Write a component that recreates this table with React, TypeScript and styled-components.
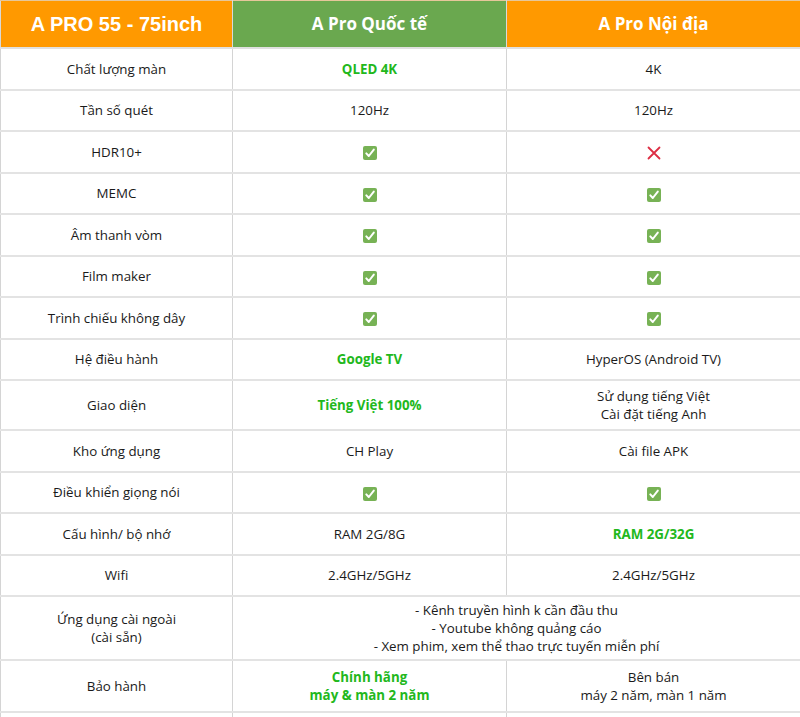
import * as React from 'react';
import styled, { createGlobalStyle } from 'styled-components';

const GlobalStyle = createGlobalStyle`
    html, body {
        margin: 0;
        padding: 0;
        background: #ffffff;
    }
    body {
        font-family: 'Open Sans', 'Noto Sans', sans-serif;
        color: #1a1a1a;
    }
`;

const Table = styled.table`
    width: 800px;
    border-collapse: collapse;
    table-layout: fixed;
    font-size: 13.33px;
    line-height: 18px;
`;

const HeadCell = styled.th<{ $bg: string; $arial?: boolean }>`
    height: 46px;
    padding: 0;
    background: ${(p) => p.$bg};
    color: #ffffff;
    font-family: ${(p) => (p.$arial ? "'Liberation Sans', Arial, sans-serif" : "'Open Sans', 'Noto Sans', sans-serif")};
    font-size: ${(p) => (p.$arial ? '20px' : '17px')};
    font-weight: bold;
    text-align: center;
    border-top: 1px solid #e6c79a;
    border-right: 1px solid #d9d9d9;
    border-bottom: 2px solid #e0e0e0;
    &:first-child {
        border-left: 1px solid #d9d9d9;
    }
`;

const Row = styled.tr<{ $h?: number }>`
    height: ${(p) => p.$h ?? 41.5}px;
`;

const Cell = styled.td<{ $green?: boolean }>`
    padding: 0 6px;
    text-align: center;
    vertical-align: middle;
    color: ${(p) => (p.$green ? '#22b81c' : '#1a1a1a')};
    font-weight: ${(p) => (p.$green ? 700 : 400)};
    border-right: 1px solid #d4d4d4;
    border-bottom: 2px solid #e3e3e3;
    &:first-child {
        border-left: 1px solid #d4d4d4;
    }
`;

const IconBox = styled.span`
    display: inline-flex;
    vertical-align: middle;
`;

const Check = () => (
    <IconBox>
        <svg width="14" height="14" viewBox="0 0 14 14">
            <rect x="0" y="0" width="14" height="14" rx="2" fill="#77b255" />
            <path d="M3.3 7.4 L5.8 10 L10.8 3.6" stroke="#ffffff" strokeWidth="2" fill="none" strokeLinecap="round" strokeLinejoin="round" />
        </svg>
    </IconBox>
);

const Cross = () => (
    <IconBox>
        <svg width="14" height="14" viewBox="0 0 14 14">
            <path d="M1.5 1.5 L12.5 12.5 M12.5 1.5 L1.5 12.5" stroke="#dd2e44" strokeWidth="1.8" strokeLinecap="round" />
        </svg>
    </IconBox>
);

type Value = React.ReactNode;

interface RowData {
    label: Value;
    intl: Value;
    local: Value;
    intlGreen?: boolean;
    localGreen?: boolean;
    h?: number;
}

const rows: RowData[] = [
    { label: 'Chất lượng màn', intl: 'QLED 4K', intlGreen: true, local: '4K' },
    { label: 'Tần số quét', intl: '120Hz', local: '120Hz' },
    { label: 'HDR10+', intl: <Check />, local: <Cross /> },
    { label: 'MEMC', intl: <Check />, local: <Check /> },
    { label: 'Âm thanh vòm', intl: <Check />, local: <Check /> },
    { label: 'Film maker', intl: <Check />, local: <Check /> },
    { label: 'Trình chiếu không dây', intl: <Check />, local: <Check /> },
    { label: 'Hệ điều hành', intl: 'Google TV', intlGreen: true, local: 'HyperOS (Android TV)' },
    {
        label: 'Giao diện',
        intl: 'Tiếng Việt 100%',
        intlGreen: true,
        local: (
            <>
                Sử dụng tiếng Việt
                <br />
                Cài đặt tiếng Anh
            </>
        ),
        h: 50,
    },
    { label: 'Kho ứng dụng', intl: 'CH Play', local: 'Cài file APK' },
    { label: 'Điều khiển giọng nói', intl: <Check />, local: <Check /> },
    { label: 'Cấu hình/ bộ nhớ', intl: 'RAM 2G/8G', local: 'RAM 2G/32G', localGreen: true },
    { label: 'Wifi', intl: '2.4GHz/5GHz', local: '2.4GHz/5GHz' },
];

const App: React.FC = () => (
    <>
        <GlobalStyle />
        <Table>
            <colgroup>
                <col style={{ width: 232 }} />
                <col style={{ width: 274 }} />
                <col style={{ width: 294 }} />
            </colgroup>
            <thead>
                <tr>
                    <HeadCell $bg="#ff9900" $arial>
                        A PRO 55 - 75inch
                    </HeadCell>
                    <HeadCell $bg="#6aa84f">A Pro Quốc tế</HeadCell>
                    <HeadCell $bg="#ff9900">A Pro Nội địa</HeadCell>
                </tr>
            </thead>
            <tbody>
                {rows.map((r, i) => (
                    <Row key={i} $h={r.h}>
                        <Cell>{r.label}</Cell>
                        <Cell $green={r.intlGreen}>{r.intl}</Cell>
                        <Cell $green={r.localGreen}>{r.local}</Cell>
                    </Row>
                ))}
                <Row $h={64}>
                    <Cell>
                        Ứng dụng cài ngoài
                        <br />
                        (cài sẵn)
                    </Cell>
                    <Cell colSpan={2}>
                        - Kênh truyền hình k cần đầu thu
                        <br />
                        - Youtube không quảng cáo
                        <br />
                        - Xem phim, xem thể thao trực tuyến miễn phí
                    </Cell>
                </Row>
                <Row $h={52}>
                    <Cell>Bảo hành</Cell>
                    <Cell $green>
                        Chính hãng
                        <br />
                        máy &amp; màn 2 năm
                    </Cell>
                    <Cell>
                        Bên bán
                        <br />
                        máy 2 năm, màn 1 năm
                    </Cell>
                </Row>
                <Row>
                    <Cell />
                    <Cell />
                    <Cell />
                </Row>
            </tbody>
        </Table>
    </>
);

export default App;
